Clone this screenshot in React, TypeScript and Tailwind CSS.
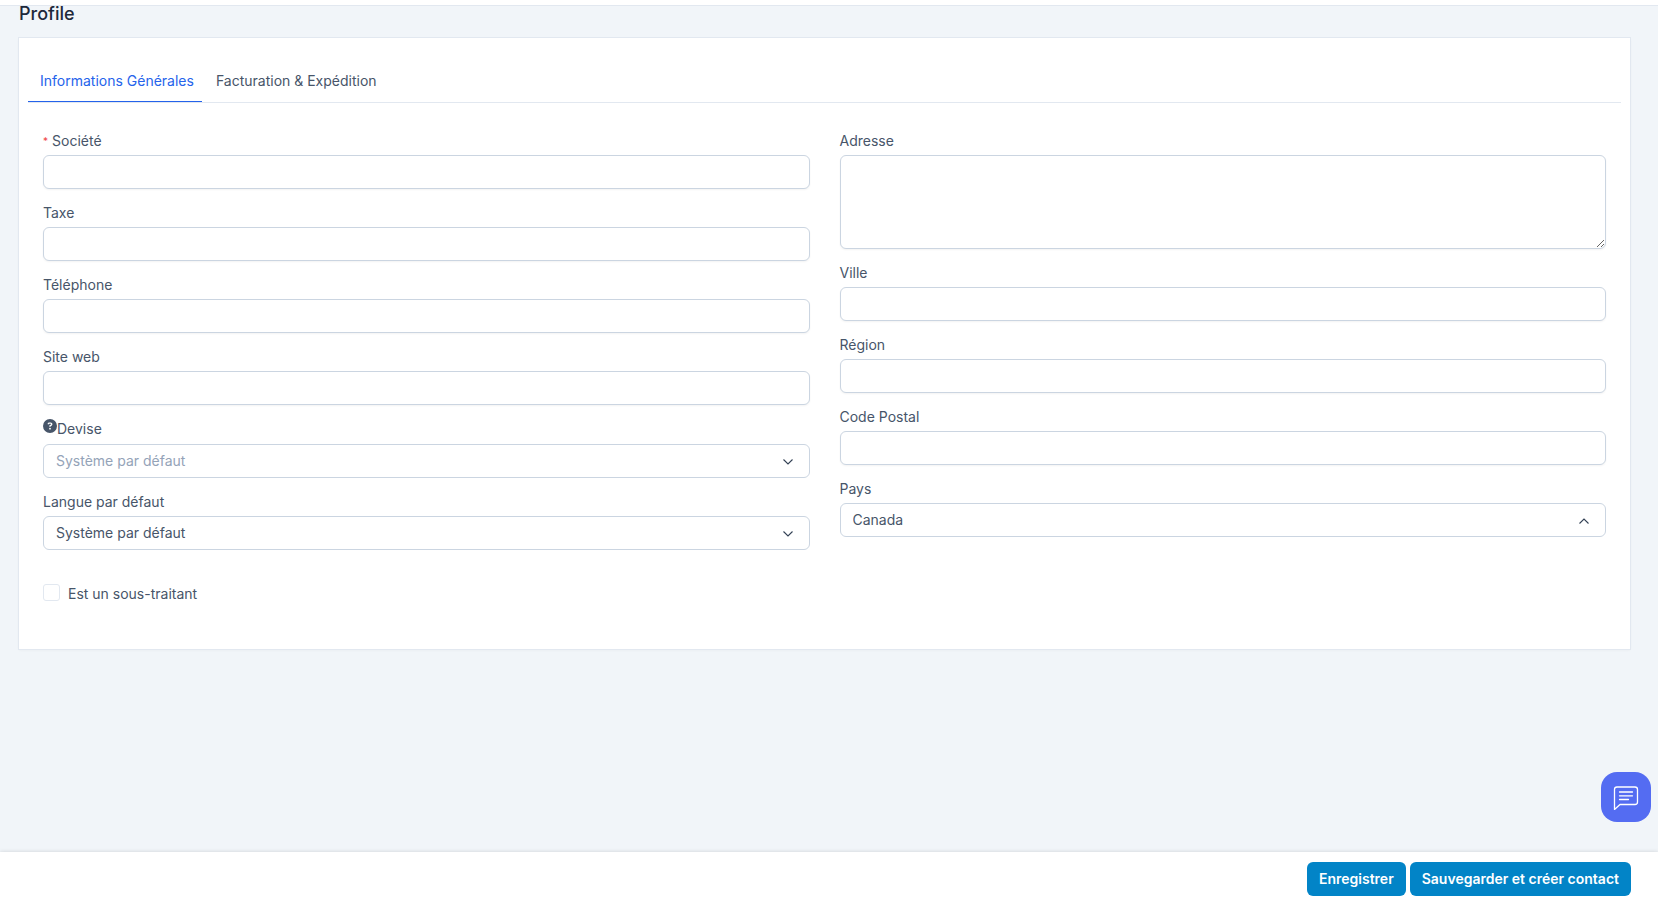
import type { ReactNode } from "react"
import { FaCircleQuestion } from "react-icons/fa6"

const controlClass =
  "block w-full h-[34px] px-3 bg-white border border-[#cbd5e1] rounded-md outline-none focus:border-[#2563eb]"

function Label({ id, children }: { id: string; children: ReactNode }) {
  return (
    <label htmlFor={id} className="flex min-h-5 mb-1 text-sm leading-5 text-[#475569]">
      {children}
    </label>
  )
}

function TextField({ id, label, required }: { id: string; label: string; required?: boolean }) {
  return (
    <div>
      <Label id={id}>
        {required && <span className="mr-1 text-[10px] text-[#ef4444]">*</span>}
        {label}
      </Label>
      <input
        id={id}
        name={id}
        type="text"
        required={required}
        className={`${controlClass} shadow-[0_1px_2px_rgba(0,0,0,0.05)]`}
      />
    </div>
  )
}

type SelectFieldProps = {
  id: string
  label: string
  options: string[]
  hint?: boolean
  muted?: boolean
  open?: boolean
}

function SelectField({ id, label, options, hint, muted, open }: SelectFieldProps) {
  return (
    <div>
      <Label id={id}>
        {hint && <FaCircleQuestion className="w-[14px] h-[14px] mb-[7px]" />}
        {label}
      </Label>
      <div className="relative">
        <select
          id={id}
          name={id}
          className={`${controlClass} appearance-none pr-10 text-sm ${muted ? "text-[#94a3b8]" : "text-[#475569]"}`}
        >
          {options.map((option) => (
            <option key={option}>{option}</option>
          ))}
        </select>
        <svg
          viewBox="0 0 10 6"
          className={`absolute right-[17px] top-[15px] w-[10px] h-[6px] pointer-events-none text-[#334155] ${open ? "rotate-180" : ""}`}
          fill="none"
          stroke="currentColor"
          strokeWidth="1.1"
        >
          <path d="M0.5 0.5 L5 5 L9.5 0.5" />
        </svg>
      </div>
    </div>
  )
}

export default function App() {
  return (
    <div className="flex flex-col min-h-screen bg-[#f1f5f9] font-['Inter',sans-serif] text-sm text-[#475569]">
      <header className="h-[6px] bg-white border-b border-[#e2e8f0]" />

      <main className="flex-1 pl-[19px] pr-7">
        <h4 className="mb-4 text-lg leading-4 font-medium text-[#1e293b]">Profile</h4>

        <div className="px-[9px] pt-[23px] pb-[45px] bg-white shadow-[0_0_0_1px_#e2e8f0,0_1px_3px_rgba(0,0,0,0.05)]">
          <nav className="flex gap-[2px] border-b border-[#e2e8f0]">
            <a href="#general" className="pl-3 pr-2 py-[10px] leading-5 text-[#2563eb] border-b border-[#2563eb]">
              Informations Générales
            </a>
            <a href="#billing" className="pl-3 pr-2 py-[10px] leading-5 border-b border-transparent">
              Facturation &amp; Expédition
            </a>
          </nav>

          <form id="client-form" className="grid grid-cols-2 gap-[30px] px-[15px] pt-7">
            <div className="flex flex-col gap-[14px]">
              <TextField id="company" label="Société" required />
              <TextField id="vat" label="Taxe" />
              <TextField id="phone" label="Téléphone" />
              <TextField id="website" label="Site web" />
              <SelectField id="currency" label="Devise" options={["Système par défaut", "CAD", "EUR", "USD"]} hint muted />
              <SelectField id="language" label="Langue par défaut" options={["Système par défaut", "Français", "English"]} />
              <div className="flex items-start gap-2 pt-5">
                <input
                  id="subcontractor"
                  type="checkbox"
                  className="w-[17px] h-[17px] appearance-none bg-white border border-[#e2e8f0] rounded-[3px] checked:bg-[#2563eb]"
                />
                <label htmlFor="subcontractor" className="leading-5">
                  Est un sous-traitant
                </label>
              </div>
            </div>

            <div className="flex flex-col gap-[14px]">
              <div>
                <Label id="address">Adresse</Label>
                <textarea
                  id="address"
                  name="address"
                  className="block w-full h-[94px] px-3 py-2 bg-white border border-[#cbd5e1] rounded-md shadow-[0_1px_2px_rgba(0,0,0,0.05)] outline-none resize-y focus:border-[#2563eb]"
                />
              </div>
              <TextField id="city" label="Ville" />
              <TextField id="state" label="Région" />
              <TextField id="zip" label="Code Postal" />
              <SelectField id="country" label="Pays" options={["Canada", "France", "Belgique", "Suisse"]} open />
            </div>
          </form>
        </div>
      </main>

      <footer className="sticky bottom-0 flex justify-end gap-1 py-[10px] pr-[27px] bg-white shadow-[0_0_4px_rgba(0,0,0,0.15)]">
        <button type="submit" form="client-form" className="h-[34px] px-3 font-semibold text-white bg-[#0284c7] rounded-md">
          Enregistrer
        </button>
        <button type="submit" form="client-form" className="h-[34px] px-3 font-semibold text-white bg-[#0284c7] rounded-md">
          Sauvegarder et créer contact
        </button>
      </footer>

      <button
        type="button"
        aria-label="Chat"
        className="fixed right-[7px] bottom-[84px] flex items-center justify-center w-[50px] h-[50px] bg-[#546cf2] rounded-2xl"
      >
        <svg viewBox="0 -1 26 26" className="w-[26px] h-[26px]" fill="none" stroke="#fff" strokeWidth="1.3" strokeLinecap="round" strokeLinejoin="round">
          <path d="M1.5 24.5 V4.5 a2.5 2.5 0 0 1 2.5 -2.5 H22 a2.5 2.5 0 0 1 2.5 2.5 V17 a2.5 2.5 0 0 1 -2.5 2.5 H7 Z" />
          <path d="M6.5 7 H19.5 M6.5 10.8 H19.5 M6.5 14.5 H15.5" />
        </svg>
      </button>
    </div>
  )
}
